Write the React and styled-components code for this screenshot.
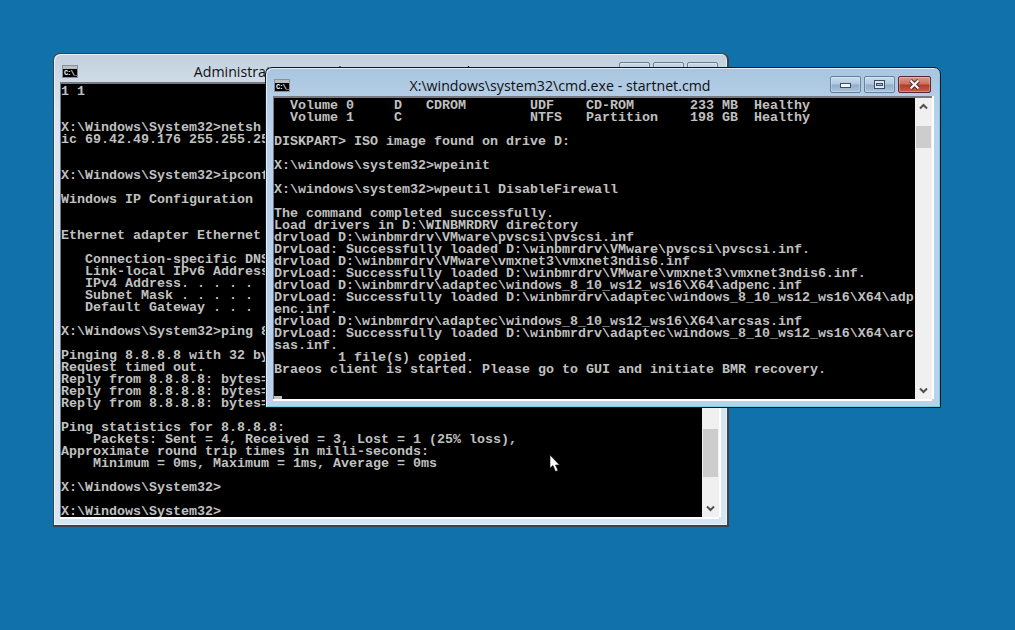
import React from 'react';
import styled, { createGlobalStyle } from 'styled-components';

const GlobalStyle = createGlobalStyle`
  html, body {
    margin: 0;
    padding: 0;
    background: #1172ab;
    overflow: hidden;
  }
`;

const Desktop = styled.div`
  position: relative;
  width: 1015px;
  height: 630px;
  overflow: hidden;
  background: #1172ab;
`;

const Window = styled.div`
  position: absolute;
  left: ${(props) => props.$left}px;
  top: ${(props) => props.$top}px;
  width: 676px;
  height: ${(props) => props.$height}px;
  box-sizing: border-box;
  display: flex;
  flex-direction: column;
  padding: 0 8px 8px ${(props) => (props.$active ? 7 : 6)}px;
  border: 1px solid ${(props) => (props.$active ? '#101820' : '#3c4248')};
  border-right-width: ${(props) => (props.$active ? 1 : 2)}px;
  border-bottom-width: ${(props) => (props.$active ? 1 : 2)}px;
  border-radius: 7px 7px 0 0;
  background: ${(props) =>
    props.$active
      ? 'linear-gradient(180deg, #a9c5df 0, #b4cee6 30px, #b9d1ea 60px)'
      : 'linear-gradient(180deg, #c2d0dd 0, #d0dde9 30px, #d8e4f1 60px)'};
  box-shadow: inset 1px 1px 0 rgba(255, 255, 255, 0.65),
    inset -1px -1px 0 ${(props) => (props.$active ? '#6fd0e6' : '#e8f0f8')};
`;

const TitleBar = styled.div`
  height: 28px;
  flex: none;
  display: flex;
  align-items: flex-start;
`;

const CmdIcon = styled.div`
  flex: none;
  width: 16px;
  height: 13px;
  margin: 11px 0 0 ${(props) => (props.$active ? 1 : 2)}px;
  box-sizing: border-box;
  padding-top: 3px;
  background: #b8bec4;
  border: 1px solid #8a9098;
`;

const CmdIconText = styled.div`
  height: 100%;
  background: #000;
  color: #fff;
  font: bold 7px/8px 'Liberation Mono', monospace;
  letter-spacing: -1px;
  padding-left: 1px;
  overflow: hidden;
  white-space: pre;
`;

const Title = styled.div`
  flex: 1;
  min-width: 0;
  text-align: center;
  white-space: nowrap;
  font: 14.2px/18px 'Open Sans', sans-serif;
  color: #101010;
  margin-top: 9px;
  padding-right: ${(props) => (props.$active ? 0 : 6)}px;
`;

const Buttons = styled.div`
  flex: none;
  display: flex;
  gap: 3px;
  margin-top: 8px;
  margin-right: 1px;
`;

const CaptionButton = styled.div`
  width: ${(props) => (props.$close ? 33 : 31)}px;
  height: 17px;
  box-sizing: border-box;
  display: flex;
  align-items: center;
  justify-content: center;
  border: 1px solid ${(props) => (props.$close ? '#5e2530' : '#65809c')};
  border-radius: 2px;
  box-shadow: inset 0 0 0 1px rgba(255, 255, 255, 0.28);
  background: ${(props) =>
    props.$close
      ? 'linear-gradient(180deg, #d49a8e 0, #c9705e 48%, #b13a28 52%, #c4604c 100%)'
      : 'linear-gradient(180deg, #c8dbec 0, #b0c9e0 48%, #8fadca 52%, #a9c4dc 100%)'};
`;

const Body = styled.div`
  flex: 1;
  min-height: 0;
  display: flex;
  border-top: 2px solid #767a80;
  border-left: 1px solid #767a80;
  box-shadow: 0 2px 0 #fff, 2px 0 0 #fff;
`;

const Screen = styled.div`
  flex: 1;
  min-width: 0;
  box-sizing: border-box;
  background: #000;
  overflow: hidden;
  padding-top: 2px;
`;

const Line = styled.div`
  height: 12px;
  font-family: 'Liberation Mono', monospace;
  font-weight: 700;
  font-size: 13.33px;
  line-height: 12px;
  color: #c0c0c0;
  white-space: pre;
`;

const Cursor = styled.div`
  width: 8px;
  height: 3px;
  margin-top: 8px;
  background: #c0c0c0;
`;

const Scrollbar = styled.div`
  flex: none;
  width: 17px;
  box-sizing: border-box;
  display: flex;
  flex-direction: column;
  align-items: center;
  background: #f0f0f0;
  padding: 0 1px;
`;

const ArrowSlot = styled.div`
  flex: none;
  height: 17px;
  display: flex;
  align-items: center;
  justify-content: center;
`;

const Track = styled.div`
  flex: 1;
  width: 100%;
  min-height: 0;
  padding-top: ${(props) => props.$thumbTop}px;
`;

const Thumb = styled.div`
  height: ${(props) => props.$size}px;
  background: #cdcdcd;
`;

const Pointer = styled.svg`
  position: absolute;
  left: 549px;
  top: 454px;
`;

const Chevron = ({ up }) => (
  <svg width="9" height="7" viewBox="0 0 9 7">
    <path
      d={up ? 'M1 5.5 L4.5 2 L8 5.5' : 'M1 1.5 L4.5 5 L8 1.5'}
      fill="none"
      stroke="#505050"
      strokeWidth="2"
    />
  </svg>
);

const Caption = ({ kind, active }) => {
  if (!active) return null;
  if (kind === 'min') {
    return <svg width="11" height="7"><rect x="0.5" y="2.5" width="10" height="4" fill="#f4f6f8" stroke="#3c4c60" /></svg>;
  }
  if (kind === 'max') {
    return <svg width="11" height="9"><rect x="0.5" y="0.5" width="10" height="8" fill="#dfe8f0" stroke="#3c4c60" /><rect x="2.5" y="3.5" width="6" height="2" fill="#a5bdd4" stroke="#3c4c60" /></svg>;
  }
  return (
    <svg width="13" height="11" viewBox="0 0 13 11">
      <path d="M2.5 1.5 L10.5 9.5 M10.5 1.5 L2.5 9.5" stroke="#4a2020" strokeWidth="4" />
      <path d="M2.5 1.5 L10.5 9.5 M10.5 1.5 L2.5 9.5" stroke="#f4f0ee" strokeWidth="2.4" />
    </svg>
  );
};

const ConsoleWindow = ({ left, top, height, active, title, lines, thumbTop, thumbSize, cursor }) => (
  <Window $left={left} $top={top} $height={height} $active={active}>
    <TitleBar>
      <CmdIcon $active={active}>
        <CmdIconText>C:\_</CmdIconText>
      </CmdIcon>
      <Title $active={active}>{title}</Title>
      <Buttons>
        <CaptionButton><Caption kind="min" active={active} /></CaptionButton>
        <CaptionButton><Caption kind="max" active={active} /></CaptionButton>
        <CaptionButton $close={active}><Caption kind="close" active={active} /></CaptionButton>
      </Buttons>
    </TitleBar>
    <Body>
      <Screen>
        {lines.map((text, i) => (
          <Line key={i}>{text}</Line>
        ))}
        {cursor && <Cursor />}
      </Screen>
      <Scrollbar>
        <ArrowSlot><Chevron up /></ArrowSlot>
        <Track $thumbTop={thumbTop}>
          <Thumb $size={thumbSize} />
        </Track>
        <ArrowSlot><Chevron /></ArrowSlot>
      </Scrollbar>
    </Body>
  </Window>
);

const backLines = [
  '1 1',
  '',
  '',
  'X:\\Windows\\System32>netsh',
  'ic 69.42.49.176 255.255.255',
  '',
  '',
  'X:\\Windows\\System32>ipconfig',
  '',
  'Windows IP Configuration',
  '',
  '',
  'Ethernet adapter Ethernet',
  '',
  '   Connection-specific DNS',
  '   Link-local IPv6 Address',
  '   IPv4 Address. . . . .',
  '   Subnet Mask . . . . .',
  '   Default Gateway . . .',
  '',
  'X:\\Windows\\System32>ping 8',
  '',
  'Pinging 8.8.8.8 with 32 by',
  'Request timed out.',
  'Reply from 8.8.8.8: bytes=',
  'Reply from 8.8.8.8: bytes=',
  'Reply from 8.8.8.8: bytes=',
  '',
  'Ping statistics for 8.8.8.8:',
  '    Packets: Sent = 4, Received = 3, Lost = 1 (25% loss),',
  'Approximate round trip times in milli-seconds:',
  '    Minimum = 0ms, Maximum = 1ms, Average = 0ms',
  '',
  'X:\\Windows\\System32>',
  '',
  'X:\\Windows\\System32>',
];

const frontLines = [
  '  Volume 0     D   CDROM        UDF    CD-ROM       233 MB  Healthy',
  '  Volume 1     C                NTFS   Partition    198 GB  Healthy',
  '',
  'DISKPART> ISO image found on drive D:',
  '',
  'X:\\windows\\system32>wpeinit',
  '',
  'X:\\windows\\system32>wpeutil DisableFirewall',
  '',
  'The command completed successfully.',
  'Load drivers in D:\\WINBMRDRV directory',
  'drvload D:\\winbmrdrv\\VMware\\pvscsi\\pvscsi.inf',
  'DrvLoad: Successfully loaded D:\\winbmrdrv\\VMware\\pvscsi\\pvscsi.inf.',
  'drvload D:\\winbmrdrv\\VMware\\vmxnet3\\vmxnet3ndis6.inf',
  'DrvLoad: Successfully loaded D:\\winbmrdrv\\VMware\\vmxnet3\\vmxnet3ndis6.inf.',
  'drvload D:\\winbmrdrv\\adaptec\\windows_8_10_ws12_ws16\\X64\\adpenc.inf',
  'DrvLoad: Successfully loaded D:\\winbmrdrv\\adaptec\\windows_8_10_ws12_ws16\\X64\\adp',
  'enc.inf.',
  'drvload D:\\winbmrdrv\\adaptec\\windows_8_10_ws12_ws16\\X64\\arcsas.inf',
  'DrvLoad: Successfully loaded D:\\winbmrdrv\\adaptec\\windows_8_10_ws12_ws16\\X64\\arc',
  'sas.inf.',
  '        1 file(s) copied.',
  'Braeos client is started. Please go to GUI and initiate BMR recovery.',
  '',
];

export default function App() {
  return (
    <Desktop>
      <GlobalStyle />
      <ConsoleWindow
        left={53}
        top={53}
        height={474}
        title="Administrator: X:\windows\system32\cmd.exe"
        lines={backLines}
        thumbTop={328}
        thumbSize={48}
      />
      <ConsoleWindow
        active
        left={265}
        top={67}
        height={341}
        title="X:\windows\system32\cmd.exe - startnet.cmd"
        lines={frontLines}
        thumbTop={11}
        thumbSize={22}
        cursor
      />
      <Pointer width="12" height="19" viewBox="0 0 12 19">
        <path d="M1 1 L1 14 L4 11.5 L6.5 17.5 L9 16.5 L6.5 11 L10.5 11 Z" fill="#fff" stroke="#111" strokeWidth="0.6" />
      </Pointer>
    </Desktop>
  );
}
